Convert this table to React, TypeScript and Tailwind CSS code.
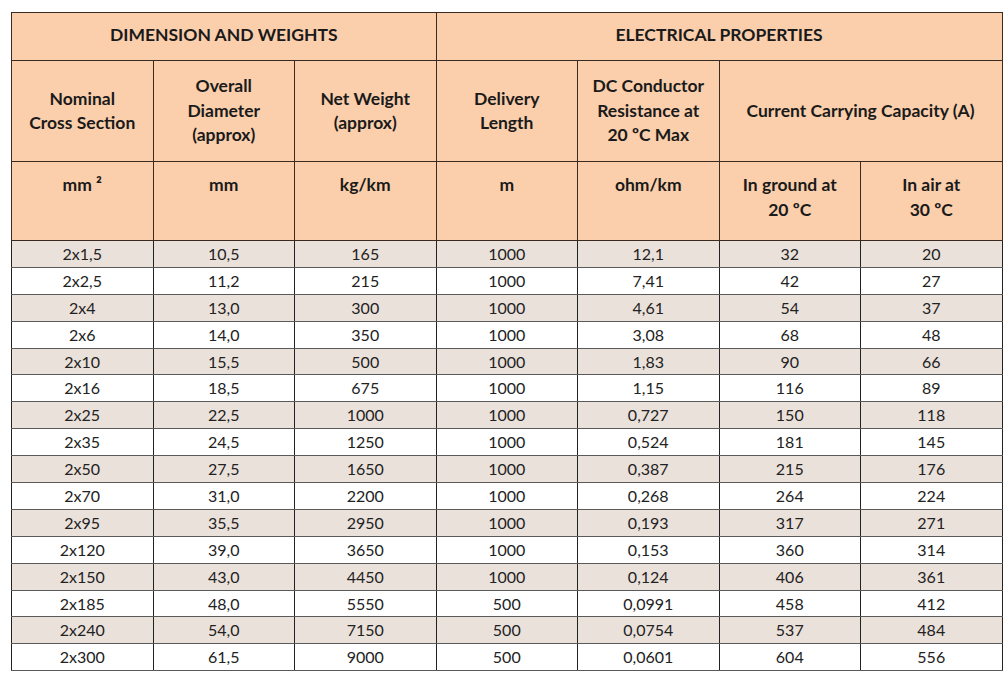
const rows = [
  ['2x1,5', '10,5', '165', '1000', '12,1', '32', '20'],
  ['2x2,5', '11,2', '215', '1000', '7,41', '42', '27'],
  ['2x4', '13,0', '300', '1000', '4,61', '54', '37'],
  ['2x6', '14,0', '350', '1000', '3,08', '68', '48'],
  ['2x10', '15,5', '500', '1000', '1,83', '90', '66'],
  ['2x16', '18,5', '675', '1000', '1,15', '116', '89'],
  ['2x25', '22,5', '1000', '1000', '0,727', '150', '118'],
  ['2x35', '24,5', '1250', '1000', '0,524', '181', '145'],
  ['2x50', '27,5', '1650', '1000', '0,387', '215', '176'],
  ['2x70', '31,0', '2200', '1000', '0,268', '264', '224'],
  ['2x95', '35,5', '2950', '1000', '0,193', '317', '271'],
  ['2x120', '39,0', '3650', '1000', '0,153', '360', '314'],
  ['2x150', '43,0', '4450', '1000', '0,124', '406', '361'],
  ['2x185', '48,0', '5550', '500', '0,0991', '458', '412'],
  ['2x240', '54,0', '7150', '500', '0,0754', '537', '484'],
  ['2x300', '61,5', '9000', '500', '0,0601', '604', '556'],
];

const th = 'border border-[#3b2a20] bg-[#fbcfac] font-bold text-[#1a1a1a] text-center text-[17.5px] leading-[24.5px] p-0';

export default function App() {
  return (
    <div className="min-h-screen bg-white pl-[11px] pt-[12px] font-['Lato',sans-serif]">
      <table className="w-[991px] table-fixed border-collapse text-[16px]">
        <colgroup>
          {[0, 1, 2, 3, 4, 5, 6].map((i) => (
            <col key={i} className="w-[141.5px]" />
          ))}
        </colgroup>
        <thead>
          <tr className="h-[48px]">
            <th colSpan={3} className={`${th} pb-[3px]`}>DIMENSION AND WEIGHTS</th>
            <th colSpan={4} className={`${th} pb-[3px]`}>ELECTRICAL PROPERTIES</th>
          </tr>
          <tr className="h-[101px]">
            <th className={th}>Nominal<br />Cross Section</th>
            <th className={th}>Overall<br />Diameter<br />(approx)</th>
            <th className={th}>Net Weight<br />(approx)</th>
            <th className={th}>Delivery<br />Length</th>
            <th className={th}>DC Conductor<br />Resistance at<br />20 ºC Max</th>
            <th colSpan={2} className={th}>Current Carrying Capacity (A)</th>
          </tr>
          <tr className="h-[79px]">
            <th className={`${th} align-top pt-[11px]`}>mm ²</th>
            <th className={`${th} align-top pt-[11px]`}>mm</th>
            <th className={`${th} align-top pt-[11px]`}>kg/km</th>
            <th className={`${th} align-top pt-[11px]`}>m</th>
            <th className={`${th} align-top pt-[11px]`}>ohm/km</th>
            <th className={`${th} align-top pt-[11px]`}>In ground at<br />20 ºC</th>
            <th className={`${th} align-top pt-[11px]`}>In air at<br />30 ºC</th>
          </tr>
        </thead>
        <tbody>
          {rows.map((r, i) => (
            <tr key={i} className={`h-[26.9px] ${i % 2 === 0 ? 'bg-[#ebe1db]' : 'bg-white'}`}>
              {r.map((c, j) => (
                <td
                  key={j}
                  className="border border-x-[#222] border-y-[#5a5a5a] text-center text-[#222] leading-[20px] p-0"
                >
                  {c}
                </td>
              ))}
            </tr>
          ))}
        </tbody>
      </table>
    </div>
  );
}
